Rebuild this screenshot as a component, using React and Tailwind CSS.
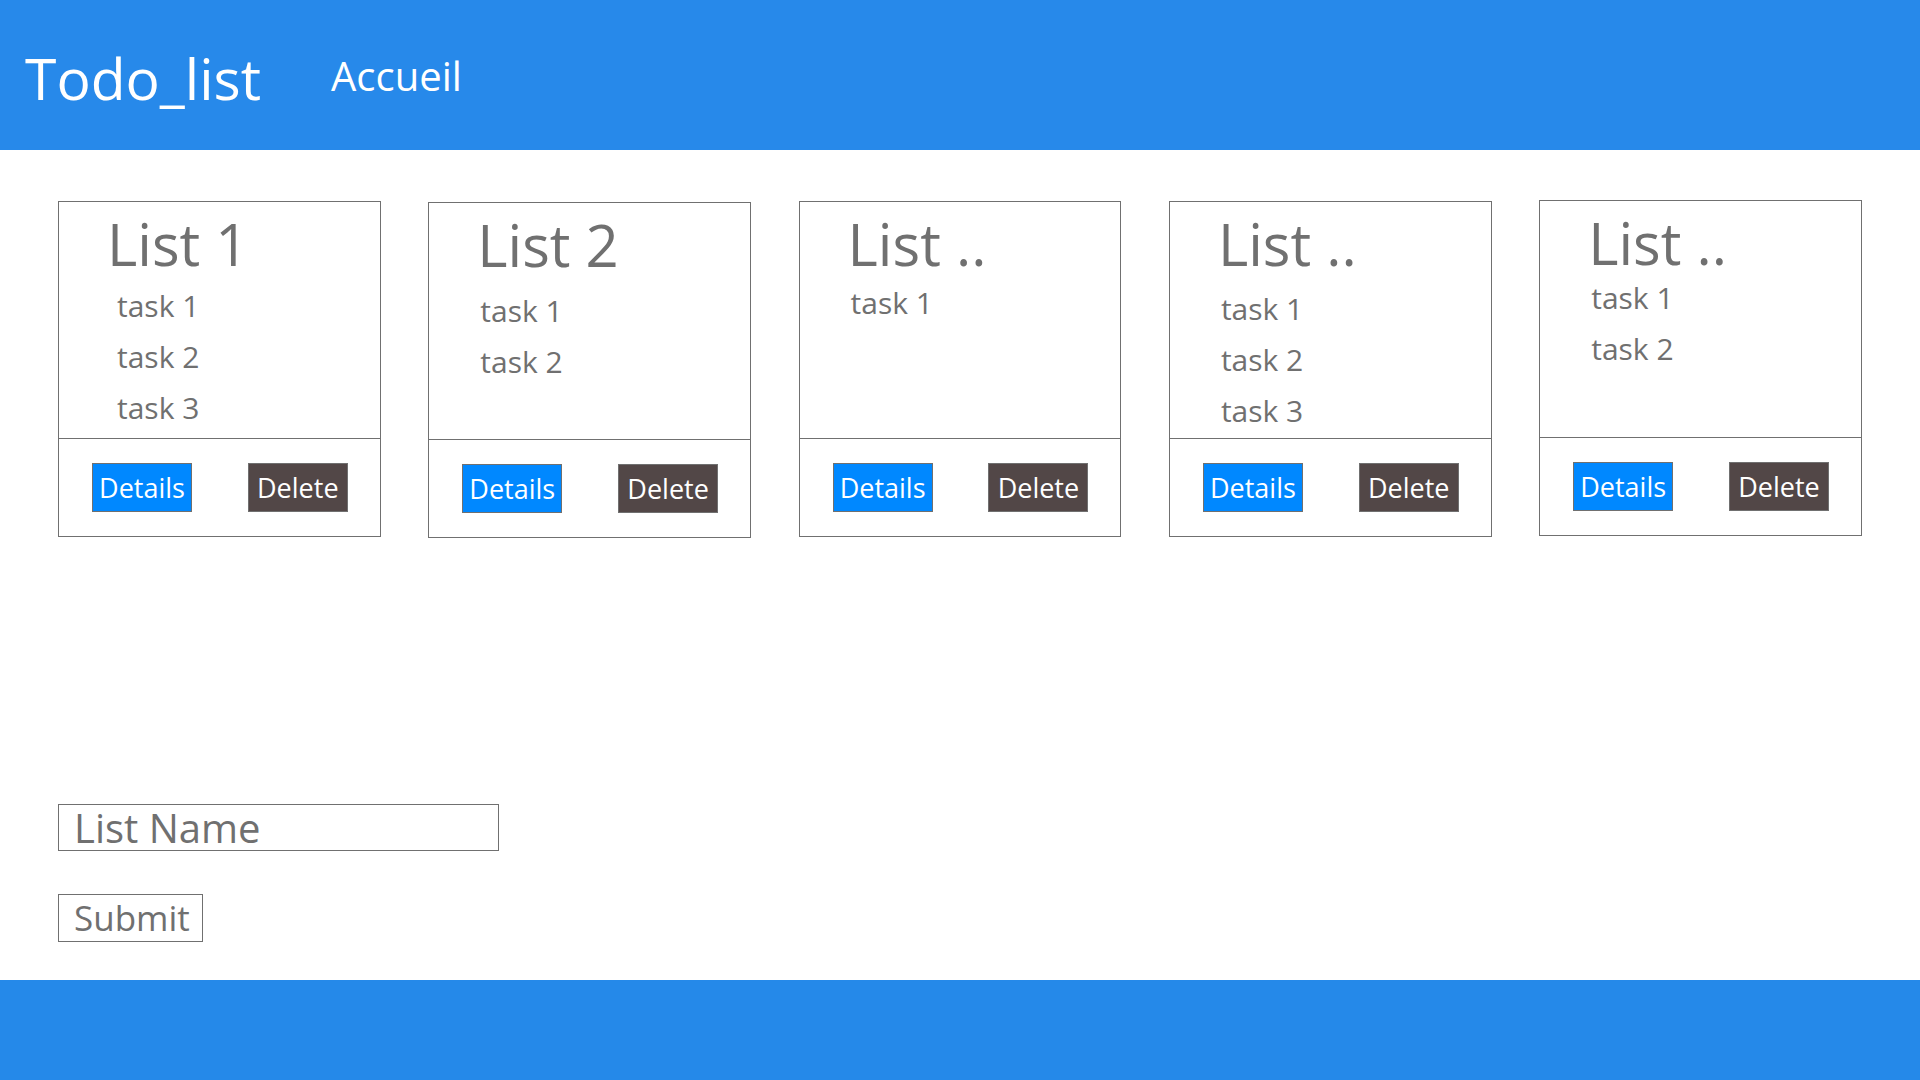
import React from "react";

const lists = [
  { title: "List 1", tasks: ["task 1", "task 2", "task 3"], box: "", tasksCls: "mt-[10px] pl-[10px]" },
  { title: "List 2", tasks: ["task 1", "task 2"], box: "mt-[1px]", tasksCls: "mt-[14px] pl-[3px]" },
  { title: "List ..", tasks: ["task 1"], box: "", tasksCls: "mt-[7px] pl-[3px]" },
  { title: "List ..", tasks: ["task 1", "task 2", "task 3"], box: "", tasksCls: "mt-[13px] pl-[3px]" },
  { title: "List ..", tasks: ["task 1", "task 2"], box: "-mt-[1px]", tasksCls: "mt-[3px] pl-[3px]" },
];

const ListCard = ({ list }) => (
  <div className={`w-[323px] border border-[#707070] bg-white flex flex-col ${list.box}`}>
    <div className="h-[236px] pl-[48px] pt-[16px] text-[#707070]">
      <h2 className="text-[58px] leading-[52px]">{list.title}</h2>
      <ul className={list.tasksCls}>
        {list.tasks.map((task, index) => (
          <li key={index} className="text-[30px] leading-[51px]">
            {task}
          </li>
        ))}
      </ul>
    </div>
    <div className="h-[98px] border-t border-[#707070] flex items-center justify-between pl-[33px] pr-[32px]">
      <button className="w-[100px] h-[49px] bg-[#0088ff] border border-[#707070] text-white text-[27px] leading-none">
        Details
      </button>
      <button className="w-[100px] h-[49px] bg-[#524747] border border-[#707070] text-white text-[27px] leading-none">
        Delete
      </button>
    </div>
  </div>
);

const App = () => {
  return (
    <div className="w-[1920px] h-[1080px] flex flex-col bg-white font-['Open_Sans',sans-serif]">
      <header className="h-[150px] bg-[#2789ea] flex items-start pt-[48px] pl-[25px] text-white">
        <h1 className="text-[57px] leading-[60px]">Todo_list</h1>
        <a href="#" className="ml-[70px] mt-[8px] text-[40px] leading-[40px]">
          Accueil
        </a>
      </header>

      <main className="h-[830px] flex flex-col px-[58px]">
        <div className="flex items-start gap-[47.5px] pt-[51px]">
          {lists.map((list, index) => (
            <ListCard key={index} list={list} />
          ))}
        </div>

        <input
          type="text"
          placeholder="List Name"
          className="mt-[266px] w-[441px] h-[47px] border border-[#707070] pl-[15px] text-[40px] leading-[45px] text-[#707070] placeholder:text-[#707070] outline-none"
        />
        <button className="mt-[43px] w-[145px] h-[48px] border border-[#707070] pl-[15px] text-left text-[35px] leading-[46px] text-[#707070]">
          Submit
        </button>
      </main>

      <footer className="h-[100px] bg-[#2589e9]" />
    </div>
  );
};

export default App;
